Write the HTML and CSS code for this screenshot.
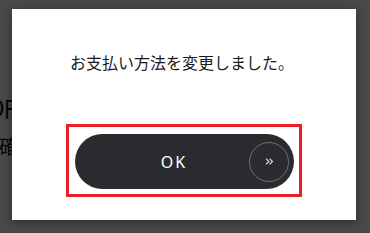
FILE: index.html
```html
<!DOCTYPE html>
<html lang="ja">
  <head>
    <meta charset="UTF-8" />
    <meta name="viewport" content="width=device-width, initial-scale=1.0" />
    <title>お支払い方法</title>

    <link rel="stylesheet" href="styles.css">
  </head>
  <body>
    <div class="page">
      <div class="price">1,000円</div>
      <div class="note">確認する</div>
    </div>

    <div class="overlay">
      <div class="modal">
        <p class="message">お支払い方法を変更しました。</p>

        <div class="focus">
          <button class="ok-btn">
            <span class="label">OK</span>
            <span class="arrow">
              <svg width="9" height="7" viewBox="0 0 9 7">
                <path d="M1 0.6 L3.9 3.5 L1 6.4 M4.6 0.6 L7.5 3.5 L4.6 6.4" fill="none" stroke="#e6e6e6" stroke-width="1.1" />
              </svg>
            </span>
          </button>
        </div>
      </div>
    </div>
  </body>
</html>
```

FILE: styles.css
```css
body {
  margin: 0;
  font-family: "Noto Sans CJK JP", "Noto Sans", sans-serif;
  background-color: #fff;
}

.page {
  width: 370px;
  height: 233px;
  padding-top: 93px;
  box-sizing: border-box;
  color: #111;
}

.page .price {
  margin-left: -50px;
  font-size: 21px;
  font-weight: 500;
  line-height: 28px;
}

.page .note {
  margin-top: 12px;
  margin-left: -1px;
  font-size: 19px;
  line-height: 26px;
}

.overlay {
  position: absolute;
  top: 0;
  left: 0;
  width: 370px;
  height: 233px;
  box-sizing: border-box;
  padding: 9px 14px 13px 12px;
  background-color: rgba(0, 0, 0, 0.71);
  display: flex;
}

.modal {
  flex: 1;
  background-color: #fff;
  box-shadow: 0 2px 10px rgba(0, 0, 0, 0.45);
  display: flex;
  flex-direction: column;
  align-items: center;
}

.message {
  margin: 42px 0 0 -4px;
  font-size: 16px;
  line-height: 22px;
  color: #1a1a1a;
}

.focus {
  margin-top: 51px;
  border: 3px solid #e8202a;
  padding: 7px 5px 5px 6px;
}

.ok-btn {
  width: 219px;
  height: 55px;
  border: none;
  border-radius: 28px;
  background-color: #2a2b2e;
  display: flex;
  align-items: center;
  padding: 0 5px 0 0;
  font-family: inherit;
  cursor: pointer;
}

.ok-btn .label {
  flex: 1;
  padding-left: 24px;
  text-align: center;
  color: #fff;
  font-size: 16px;
  letter-spacing: 2px;
  font-family: "Noto Sans", sans-serif;
}

.ok-btn .arrow {
  width: 38px;
  height: 38px;
  border: 1.5px solid #6f6f6f;
  border-radius: 50%;
  display: flex;
  align-items: center;
  justify-content: center;
}
```
